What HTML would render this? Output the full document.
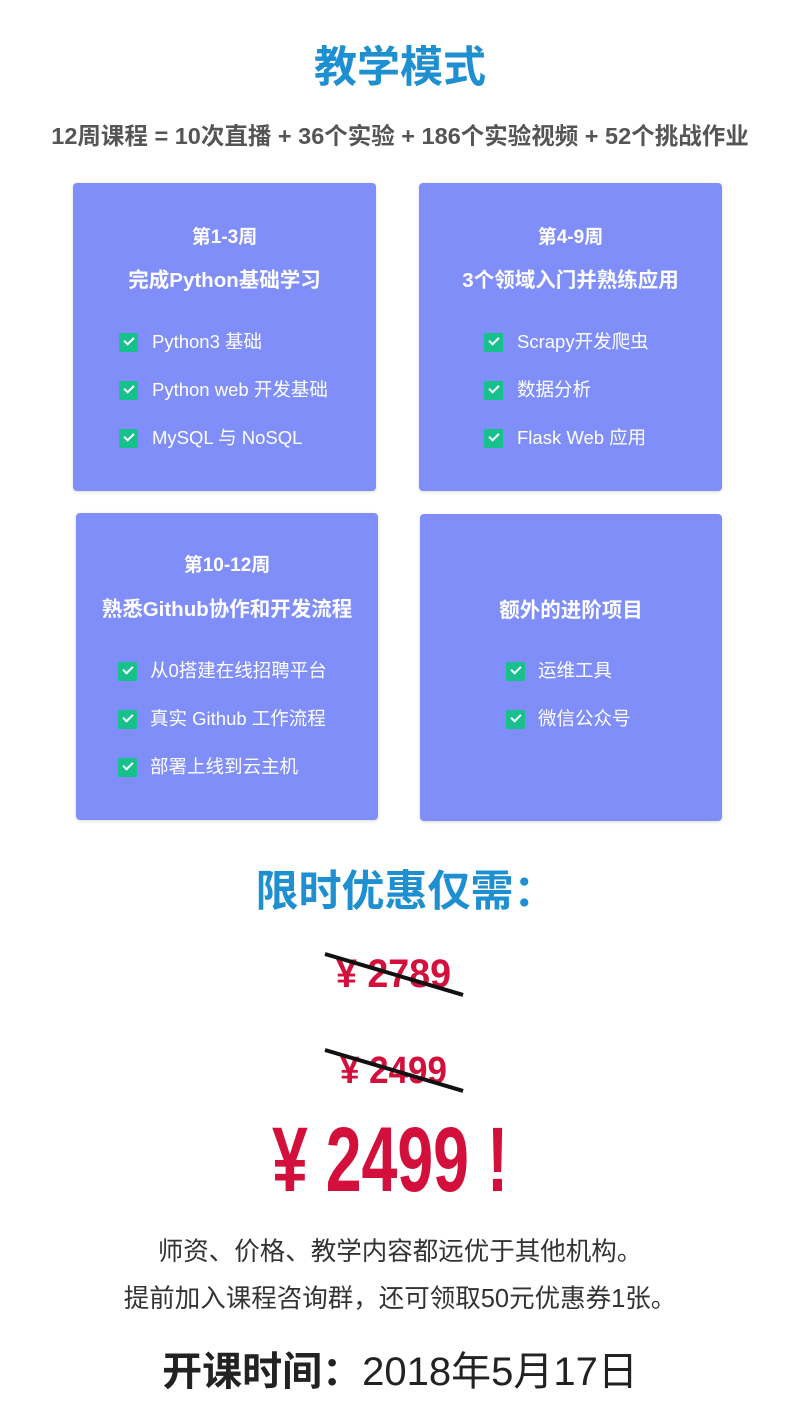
<!DOCTYPE html>
<html><head><meta charset="utf-8"><style>
body{margin:0;width:800px;height:1422px;background:#fff;position:relative;overflow:hidden;font-family:"Liberation Sans","Noto Sans CJK SC",sans-serif}
.a{position:absolute;white-space:nowrap}
.c{position:absolute;left:0;width:800px;text-align:center;white-space:nowrap}
.card{position:absolute;background:#7f8ef8;border-radius:4px;box-shadow:0 1px 3px rgba(0,0,0,.15)}
.t{position:absolute;left:0;right:0;text-align:center;color:#fff;font-weight:bold;font-size:19px;line-height:26px}
.t2{font-size:20.5px}
.it{position:absolute;color:#fff;font-size:18.5px;line-height:24px;white-space:nowrap}
.ck{position:absolute;width:19px;height:19px;background:#17c08c;border-radius:1px}
.ck:after{content:"";position:absolute;left:5px;top:4px;width:8px;height:4px;border-left:2.5px solid #fff;border-bottom:2.5px solid #fff;transform:rotate(-45deg)}
.red{color:#d3103c;font-weight:bold;font-family:"Liberation Sans Narrow","Liberation Sans",sans-serif}
.strike{position:absolute;height:4px;background:#111;transform-origin:0 50%}
</style></head><body>
<div class="c" style="top:40px;font-size:43px;font-weight:bold;color:#1e8fd0;line-height:56px">教学模式</div>
<div class="c" style="top:120px;font-size:23.5px;font-weight:bold;color:#555;line-height:32px">12周课程 = 10次直播 + 36个实验 + 186个实验视频 + 52个挑战作业</div>

<div class="card" style="left:73px;top:183px;width:303px;height:308px">
<div class="t" style="top:42px">第1-3周</div>
<div class="t t2" style="top:85px">完成Python基础学习</div>
<div class="ck" style="left:46px;top:150px"></div><div class="it" style="left:79px;top:147px">Python3 基础</div>
<div class="ck" style="left:46px;top:198px"></div><div class="it" style="left:79px;top:195px">Python web 开发基础</div>
<div class="ck" style="left:46px;top:246px"></div><div class="it" style="left:79px;top:243px">MySQL 与 NoSQL</div>
</div>
<div class="card" style="left:419px;top:183px;width:303px;height:308px">
<div class="t" style="top:42px">第4-9周</div>
<div class="t t2" style="top:85px">3个领域入门并熟练应用</div>
<div class="ck" style="left:65px;top:150px"></div><div class="it" style="left:98px;top:147px">Scrapy开发爬虫</div>
<div class="ck" style="left:65px;top:198px"></div><div class="it" style="left:98px;top:195px">数据分析</div>
<div class="ck" style="left:65px;top:246px"></div><div class="it" style="left:98px;top:243px">Flask Web 应用</div>
</div>
<div class="card" style="left:76px;top:513px;width:302px;height:307px">
<div class="t" style="top:40px">第10-12周</div>
<div class="t t2" style="top:84px">熟悉Github协作和开发流程</div>
<div class="ck" style="left:42px;top:149px"></div><div class="it" style="left:74px;top:146px">从0搭建在线招聘平台</div>
<div class="ck" style="left:42px;top:197px"></div><div class="it" style="left:74px;top:194px">真实 Github 工作流程</div>
<div class="ck" style="left:42px;top:245px"></div><div class="it" style="left:74px;top:242px">部署上线到云主机</div>
</div>
<div class="card" style="left:420px;top:514px;width:302px;height:307px">
<div class="t t2" style="top:84px">额外的进阶项目</div>
<div class="ck" style="left:86px;top:148px"></div><div class="it" style="left:118px;top:145px">运维工具</div>
<div class="ck" style="left:86px;top:196px"></div><div class="it" style="left:118px;top:193px">微信公众号</div>
</div>

<div class="c" style="top:864px;font-size:43px;font-weight:bold;color:#1e8fd0;line-height:56px;padding-left:12px;box-sizing:border-box">限时优惠仅需：</div>

<div class="a red" style="left:336px;top:950px;font-size:40px;line-height:48px;transform:scaleX(.94);transform-origin:0 0">¥ 2789</div>
<div class="strike" style="left:325px;top:952px;width:144px;transform:rotate(16.5deg)"></div>
<div class="a red" style="left:340px;top:1048px;font-size:38px;line-height:46px;transform:scaleX(.92);transform-origin:0 0">¥ 2499</div>
<div class="strike" style="left:325px;top:1048px;width:144px;transform:rotate(16.5deg)"></div>

<div class="a red" style="left:272px;top:1110px;font-size:92px;line-height:100px;transform:scaleX(.7);transform-origin:0 0">¥ 2499 !</div>

<div class="c" style="top:1235px;font-size:25.5px;color:#333;line-height:34px">师资、价格、教学内容都远优于其他机构。</div>
<div class="c" style="top:1282px;font-size:25.5px;color:#333;line-height:34px">提前加入课程咨询群，还可领取50元优惠券1张。</div>
<div class="c" style="top:1346px;font-size:40px;color:#222;line-height:52px"><b>开课时间：</b>2018年5月17日</div>
</body></html>
